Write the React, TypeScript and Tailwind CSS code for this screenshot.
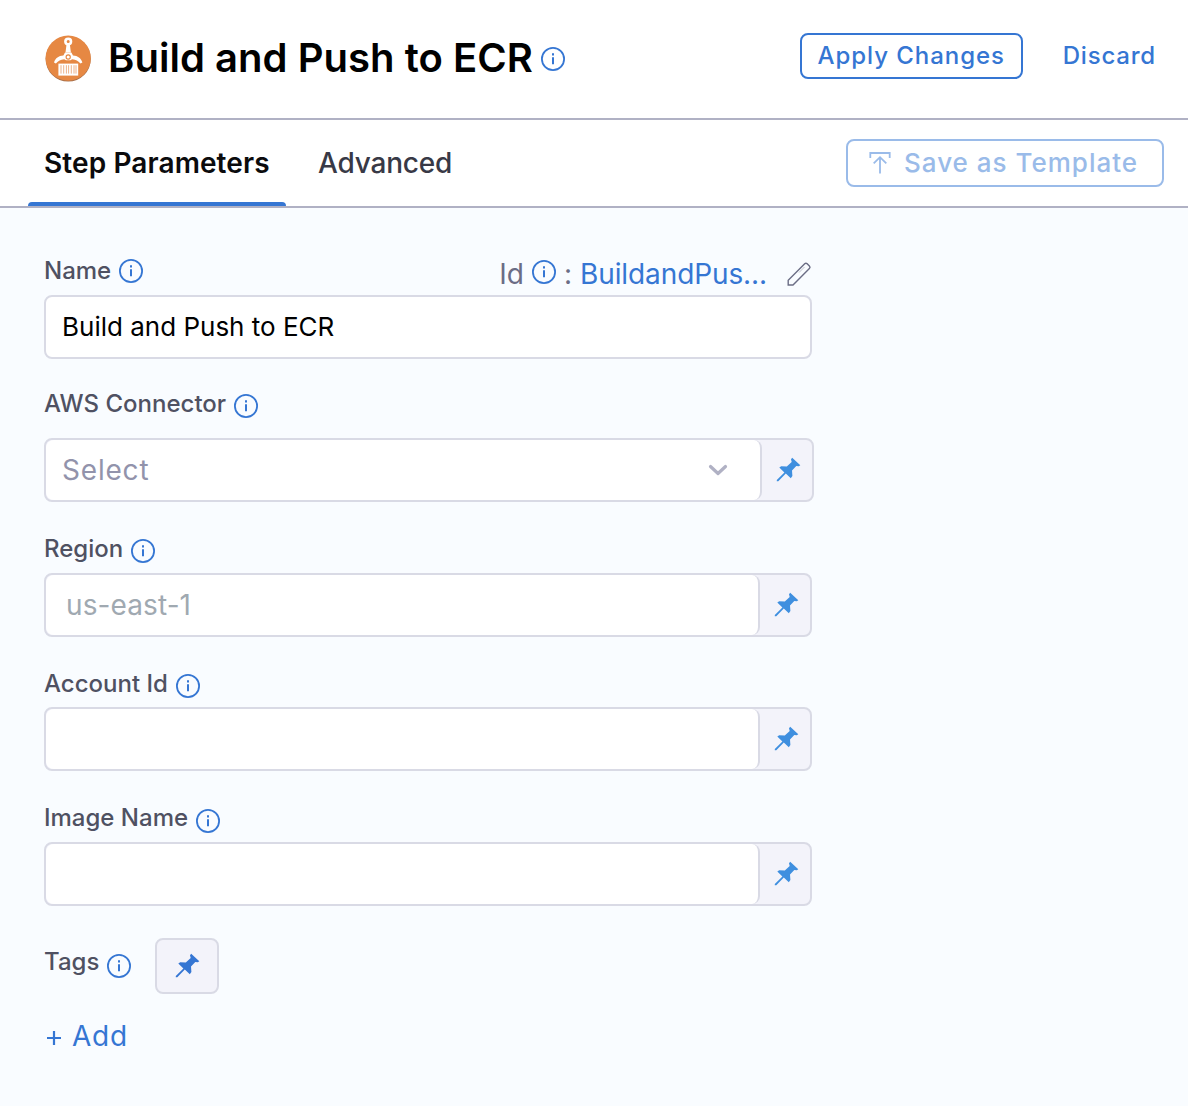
import React from "react";

function InfoIcon({ className = "" }: { className?: string }) {
  return (
    <svg className={"block h-6 w-6 shrink-0 " + className} viewBox="0 0 24 24" fill="none">
      <circle cx="12" cy="12" r="11.1" stroke="#3576d3" strokeWidth="1.8" />
      <path d="M12 6.2v2.2M12 10.2v7" stroke="#3576d3" strokeWidth="2" />
    </svg>
  );
}

function PinIcon({ className = "" }: { className?: string }) {
  return (
    <svg className={"block h-[25px] w-[25px] " + className} viewBox="0 0 25 25" fill="currentColor">
      <path d="M16.2.8 24.300 8.300l-1.500.9-2.500-.2-4.300 4.500.4 5.400-1.600 2.400-5-4.700-7.500 7.700H.8v-1.200l7.600-7.700L3.300 10.600l1.900-1.300 5.600.3 4.900-4.600-.7-2.700z" />
    </svg>
  );
}

function CraneIcon() {
  return (
    <svg className="block h-[48px] w-[48px] shrink-0" viewBox="0 0 48 48">
      <circle cx="24.2" cy="24" r="22.6" fill="#a86f49" />
      <circle cx="24.2" cy="23.2" r="22.6" fill="#e68843" />
      <circle cx="24.200" cy="6.600" r="2.800" fill="none" stroke="#fff" strokeWidth="2.600" />
      <path d="M22.500 9.500h3.400l1 8h-5.400z" fill="#fff" />
      <path d="M21 17.600h6.400l1.600 3c4.900.4 7.800 2.300 9.400 6.900l-1.900 1.100c-2.600-2.900-4.400-3.800-8.300-4.300l-1.800 1h-4.400l-1.800-1c-3.900.5-5.700 1.400-8.300 4.300L10 27.500c1.600-4.600 4.500-6.500 9.400-6.900z" fill="#fff" />
      <circle cx="24.200" cy="22" r="2.100" fill="#fff" stroke="#e68843" strokeWidth="1.100" />
      <path d="M14.400 28.600h19.800V40.600H14.400z" fill="#fff" />
      <path d="M17 30.200v8.400M19.700 30.200v8.400M22.400 30.200v8.400M24.600 30.200v8.400M27.300 30.200v8.400M30 30.200v8.400M32 30.200v8.400" stroke="#e9a06c" strokeWidth=".8" />
    </svg>
  );
}

function PinnedInput({ wide = false, children }: { wide?: boolean; children?: React.ReactNode }) {
  return (
    <div className={"flex h-16 rounded-lg border-2 border-[#d9dae5] bg-[#f3f3fa] " + (wide ? "w-[770px]" : "w-[768px]")}>
      <div className="flex min-w-0 flex-1 items-center rounded-lg border-r-2 border-[#d9dae5] bg-white">{children}</div>
      <div className="flex w-[50px] items-center justify-center pb-px pl-0.5 text-[#3f8fdf]">
        <PinIcon />
      </div>
    </div>
  );
}

function Label({ children, className = "", iconClass = "" }: { children: React.ReactNode; className?: string; iconClass?: string }) {
  return (
    <div className={"flex h-6 items-center text-[24px] leading-6 font-medium text-[#4f5162] " + className}>
      <span>{children}</span>
      <InfoIcon className={iconClass} />
    </div>
  );
}

export default function App() {
  return (
    <div className="flex h-[1106px] w-[1188px] flex-col overflow-hidden bg-[#f9fcff] font-['Inter',sans-serif] whitespace-nowrap">
      <header className="flex h-[120px] items-start border-b-2 border-[#b0b1c4] bg-white pl-11">
        <div className="flex h-[118px] items-center">
          <CraneIcon />
          <h1 className="ml-4 pb-0.5 text-[40px] leading-[48px] font-semibold tracking-[0.04px] text-black">Build and Push to ECR</h1>
          <InfoIcon className="ml-2" />
        </div>
        <button className="mt-[33px] ml-auto flex h-[46px] w-[223px] items-center justify-center rounded-lg border-2 border-[#3576d3] text-[24px] font-medium tracking-[0.95px] text-[#3576d3]">
          Apply Changes
        </button>
        <button className="mt-[33px] mr-8 ml-10 flex h-[46px] items-center text-[24px] font-medium tracking-[0.8px] text-[#3576d3]">Discard</button>
      </header>

      <nav className="flex h-[88px] items-center border-b-2 border-[#b0b1c4] bg-white pr-6 pl-7">
        <div className="flex h-full w-[258px] flex-col justify-between">
          <span className="pt-[25px] pl-4 text-[28px] leading-9 font-semibold tracking-[0.1px] text-[#0b0b0d]">Step Parameters</span>
          <span className="h-1 rounded-t-[4px] bg-[#3576d3]" />
        </div>
        <span className="ml-8 text-[28px] leading-9 font-medium tracking-[-0.2px] text-[#383946]">Advanced</span>
        <button className="ml-auto flex h-12 w-[318px] items-center rounded-lg border-2 border-[#9abbe9] pb-0.5 pl-5 text-[26px] font-medium tracking-[1px] text-[#9abbe9]">
          <svg className="mt-0.5 mr-3 h-6 w-6" viewBox="0 0 24 24" fill="none" stroke="currentColor" strokeWidth="1.8">
            <path d="M2.3 7V2h19.4v5M12 22.500V6.500M5.700 12.300 12 6.200l6.300 6.100" />
          </svg>
          Save as Template
        </button>
      </nav>

      <main className="flex flex-1 flex-col pl-11">
        <div className="flex h-[87px] w-[768px] items-start pt-[51px]">
          <Label iconClass="ml-2">Name</Label>
          <div className="-mt-px ml-auto flex h-8 items-center text-[28px] leading-8 text-[#6b6d85]">
            <span>Id</span>
            <InfoIcon className="-mt-1 ml-2" />
            <span className="ml-2">:</span>
            <span className="ml-2 tracking-[-0.1px] text-[#3576d3]">BuildandPus...</span>
            <svg className="ml-[19px] h-[26px] w-[26px]" viewBox="0 0 26 26" fill="none" stroke="#6b6d85" strokeWidth="1.4">
              <path d="M2.200 24v-4.800L18.700 2.800c.8-.8 1.700-.8 2.500 0L23.400 5c.8.8.8 1.700 0 2.500L7 24z" />
              <path d="m13 11.500 5.500-5.500" strokeWidth=".8" opacity=".5" />
            </svg>
          </div>
        </div>
        <div className="flex h-16 w-[768px] items-center rounded-lg border-2 border-[#d9dae5] bg-white pb-0.5 pl-4 text-[26px] text-black">Build and Push to ECR</div>

        <Label className="mt-[33px] mb-[22px]" iconClass="mt-1 ml-2">AWS Connector</Label>
        <PinnedInput wide>
          <span className="pl-4 text-[28px] tracking-[0.8px] text-[#9293ab]">Select</span>
          <svg className="mr-8 ml-auto h-5 w-5" viewBox="0 0 20 20" fill="none" stroke="#b0b1c4" strokeWidth="3.2" strokeLinecap="round" strokeLinejoin="round">
            <path d="m2.500 6.500 7.500 7 7.500-7" />
          </svg>
        </PinnedInput>

        <Label className="mt-[35px] mb-3" iconClass="mt-1 ml-2">Region</Label>
        <PinnedInput>
          <span className="pl-5 text-[28px] tracking-[0.1px] text-[#a0a9b1]">us-east-1</span>
        </PinnedInput>

        <Label className="mt-[35px] mb-[11px]" iconClass="mt-1 ml-2">Account Id</Label>
        <PinnedInput />

        <Label className="mt-[35px] mb-3" iconClass="mt-1.5 ml-2">Image Name</Label>
        <PinnedInput />

        <div className="mt-8 flex h-14 items-start">
          <Label className="mt-3" iconClass="mt-2 ml-2">Tags</Label>
          <button className="ml-6 flex h-14 w-16 items-center justify-center rounded-lg border-2 border-[#d9dae5] bg-[#f3f3fa] pb-px text-[#3576d3]">
            <PinIcon />
          </button>
        </div>
        <button className="mt-6 flex h-9 items-center text-[28px] tracking-[0.8px] text-[#3576d3]">
          <svg className="mt-1 mr-2.5 ml-0.5 h-4 w-4" viewBox="0 0 16 16" stroke="currentColor" strokeWidth="2.200">
            <path d="M8 1v14M1 8h14" />
          </svg>
          <span>Add</span>
        </button>
      </main>
    </div>
  );
}
